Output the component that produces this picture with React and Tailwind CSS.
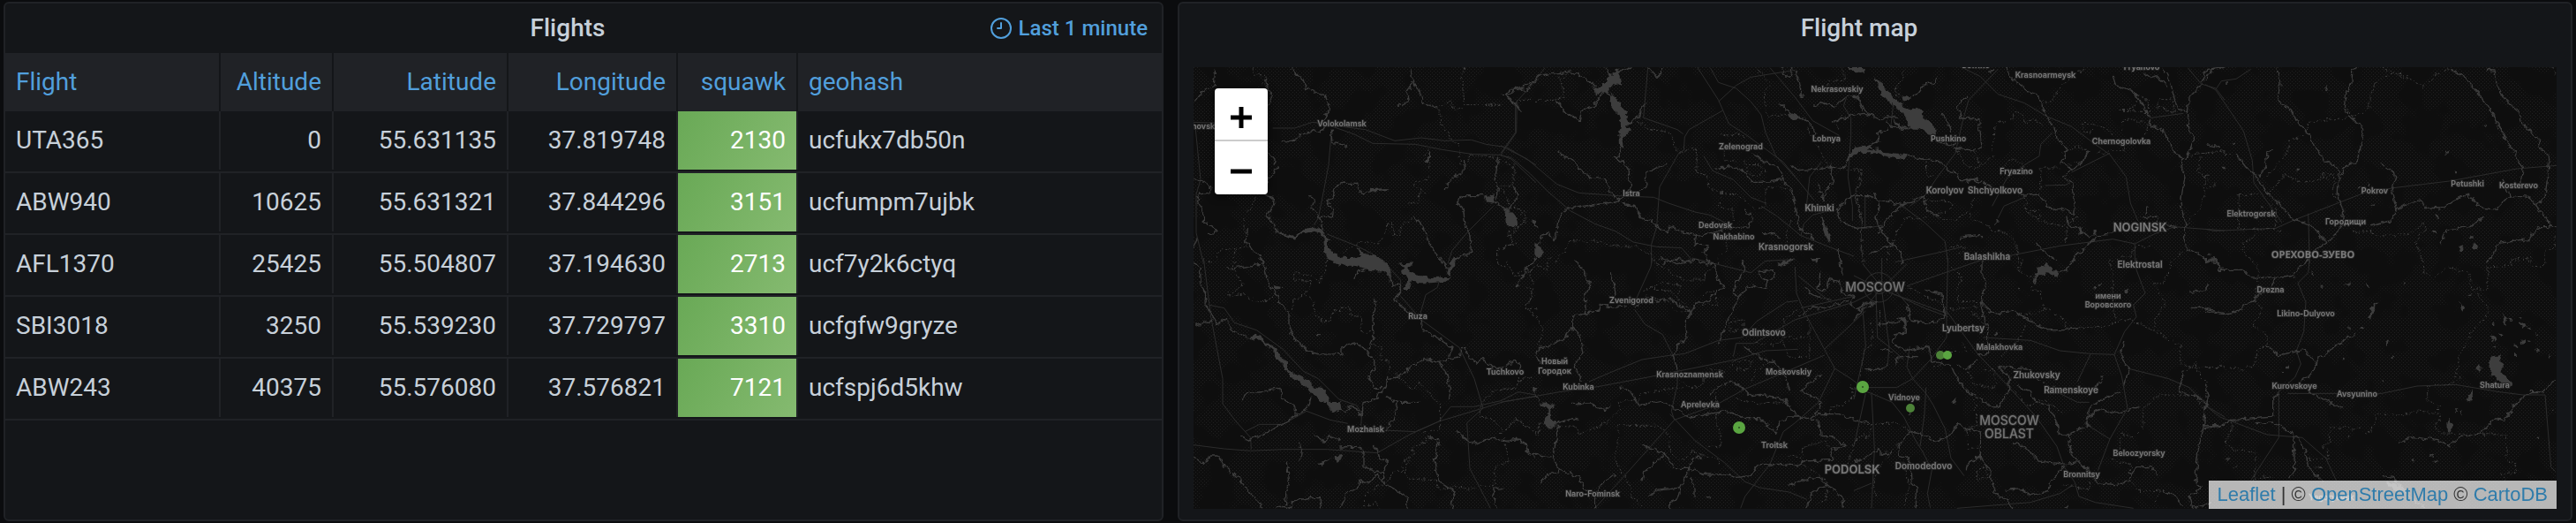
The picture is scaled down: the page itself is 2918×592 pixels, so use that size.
import React from "react";

const FLIGHTS = [
  ["UTA365", "0", "55.631135", "37.819748", "2130", "ucfukx7db50n"],
  ["ABW940", "10625", "55.631321", "37.844296", "3151", "ucfumpm7ujbk"],
  ["AFL1370", "25425", "55.504807", "37.194630", "2713", "ucf7y2k6ctyq"],
  ["SBI3018", "3250", "55.539230", "37.729797", "3310", "ucfgfw9gryze"],
  ["ABW243", "40375", "55.576080", "37.576821", "7121", "ucfspj6d5khw"],
];

const COLUMNS = [
  { name: "Flight", width: "w-[244px]" },
  { name: "Altitude", width: "w-[128px]", right: true },
  { name: "Latitude", width: "w-[198px]", right: true },
  { name: "Longitude", width: "w-[192px]", right: true },
  { name: "squawk", width: "w-[136px]", right: true, heat: true },
  { name: "geohash", width: "", last: true },
];

// Each tile holds its vector layers in tile units (a third of a map unit).
const TILES = [
  {
    x: 1320, y: 0,
    rivers: "M170 230L166 290 120 315 96 350M425 230L440 245 470 275 480 300 520 318 540 322 552 350 562 370 545 390 538 410M565 440L570 485 605 492 617 503M540 430L525 450 505 440 485 452 460 455 440 478 415 478 395 482M833 230L840 280 862 308 878 350 900 362 930 366M840 285L822 310 825 345 790 362M340 265L345 295 362 325 350 360M350 515L372 540 370 560M385 562L355 600 340 640 345 655M1260 275L1225 308 1190 292 1180 315 1157 325 1190 352 1210 380M1015 545L1018 575 985 600 958 625 955 645M96 608L130 615 160 640 150 655 115 660 110 690 130 720 130 755 165 772 175 782 165 792 145 793M96 845L110 805M340 665L365 670 372 685 345 735 372 765 375 790 410 795M490 667L508 675 498 705 525 740M545 685L570 670 575 640 600 622 650 622 670 660 700 645 755 642M545 685L570 705 565 735 525 740 535 790M845 735L880 775 885 805 905 835 940 895M1085 665L1010 665 992 690 1012 710 1020 760 1035 800 1040 860 1000 870 975 890M1110 680L1165 718 1200 665 1185 630M1130 530L1122 610 1132 645 1125 680M280 780L275 820 300 855 325 865 330 895",
    water: "M1158 718C1178 710 1202 745 1195 765C1180 780 1155 770 1155 735ZM1082 670L1118 656 1115 690 1090 685ZM885 548L900 512 900 535 888 556ZM695 642L755 640 755 645 697 650ZM395 785L440 805 475 776 520 772 540 790 555 815 555 845 585 865 620 880 660 872 650 840 680 862 720 870 745 895 745 902 600 902 555 885 540 850 538 800 510 785 470 792 440 812 405 800Z",
    roads: "M365 435L440 435 500 415 540 420 640 455 705 487 850 490 940 508 1040 523 1140 526 1175 540 1260 620M600 430L680 440 780 478 870 468 950 478 1040 475 1090 490 1160 500 1260 560M1195 340L1193 450 1140 526M96 415L180 418M565 440L555 560 540 640 520 740 505 765M103 440L120 610 105 660 105 790 130 895M550 795L650 835 700 860 745 895M960 895L975 850 1030 785 1080 735 1115 700",
    borders: "M297 230L300 255 335 258 338 275 315 298M1020 230L1005 255 1018 320 1012 356 1145 355M930 366L965 345 985 372 1010 368M930 370L940 420 960 450 975 485 1000 488 1005 560M895 505L878 540 900 560 898 600 850 620 845 632 890 655M865 640L860 690 825 692M845 735L800 770 798 800 780 800 770 758 752 760 750 790 720 830 680 820 640 828 600 865M310 670L290 705 262 735 270 780 275 840 180 850 175 890 135 890M240 848L225 895M1185 560L1185 625 1130 632 1160 665 1165 690 1220 720 1222 755 1165 790 1190 828 1130 848 1130 895M1025 555L1035 525 1120 535 1180 560",
  },
  {
    x: 1700, y: 0,
    rivers: "M0 325L15 325 48 292 60 305 110 278 130 255 180 250 235 243 280 262 320 290M15 325L40 345 70 378M350 310L325 345 315 360 280 368 270 410 245 395 215 380 200 350 180 340M385 265L415 235 445 228M500 228L530 262 548 250 548 228M495 347L475 370 470 395 435 415M408 490L402 532 385 530 410 548 435 575 440 635 405 680 370 650 355 605 310 605 265 575 250 545 215 530 195 515M568 555L520 575 492 590 495 635 470 650M405 680L360 690 270 702 218 712 195 745 185 820 160 790 140 795 135 820 118 850M415 690L455 700 475 740 510 748 535 775 565 788 575 768 600 780 640 795 665 800 720 790 790 775 845 770 853 745 832 710M665 800L660 830 705 830 690 855 710 895M720 572L750 565 800 568 830 585 850 620 910 618 960 610 985 640 1000 690 1010 740 1015 780 1050 800 1065 815M945 348L985 385 1040 410 1062 430 1070 470M1000 240L1015 275 1022 325M955 230L965 258 985 258 990 230M1065 358L1090 348 1135 362 1180 325 1215 330 1230 375M1125 418L1180 395 1230 385 1260 390M850 520L900 550 945 570 960 610M985 560L1010 578 1060 575 1130 565 1165 575 1180 545M1080 625L1095 680 1110 640 1130 620 1120 560M885 790L930 795 950 810M1200 665L1170 680 1140 715 1155 755 1210 775 1260 770M550 895L600 880 650 890M1150 840L1150 895",
    water: "M350 228L375 255 400 235 405 265 410 295 385 280 364 306 378 325 405 345 405 362 430 385 427 408 445 415 425 430 445 437 420 460 417 500 402 498 400 460 408 430 407 400 370 348 370 320 350 312 320 322 316 295 345 298 370 265ZM15 720C35 715 60 740 57 765C35 785 15 765 15 720ZM115 825L140 840 145 860 125 875 115 860ZM1178 228L1230 228 1240 250 1215 245ZM975 385L1010 395 1000 405 980 398ZM1170 545L1190 515 1230 492 1260 500 1240 515 1200 525 1180 550ZM1090 730L1110 780 1125 822 1110 815 1095 770ZM1018 318h10v12h-10ZM105 745L120 750 128 780 115 765Z",
    roads: "M668 228L740 340 775 420 830 455 960 550 1065 680M712 230L740 280 800 300 850 345 885 390 900 450 935 530 1000 600M740 345L800 290 850 262 1000 238M755 375L640 440 625 465 622 510 605 520 540 635 530 770 512 830 512 895M0 528L35 535 100 590 160 650 235 715 320 760 390 785 450 822 530 838 615 842 655 890M0 495L90 540 190 625 265 655 400 665 520 670 570 690 660 720 710 730 770 760M150 230L95 300 50 350 50 450 0 520M500 230L485 400 600 440 620 455M885 700L940 735 1020 800 1120 840 1200 870M1175 330L1165 360 1190 400 1190 460 1180 600 1195 700 1195 750M915 230L1000 330 1060 410 1150 460M1020 800L1030 760 1060 730 1100 720M690 530L720 580 790 610 850 670 900 690M1040 690L1050 600 1090 550",
    borders: "M200 260L215 330 180 340 60 340M235 245L200 275M465 415L500 435 580 452 590 490 605 520 668 500 665 585 700 595 710 640 750 655 740 700 790 715 790 750M870 230L885 250 920 285 895 310 895 350 910 395 960 390 1040 400M745 455L780 460 800 450 830 465M760 500L760 545 800 550M830 545L835 580 870 600 900 580 880 560 840 560M750 655L800 660 830 680 860 712 900 700 900 640 940 630 990 650M1045 410L1050 460 1090 520 1110 560M1160 230L1165 270 1120 275 1115 290M1175 580L1210 570 1225 600 1210 660 1225 750 1230 895M990 750L970 790 975 830M0 630L40 630 40 560M55 705L85 740 50 785 25 800 45 830 0 845M230 818L335 820 370 835 470 840 520 870 525 895M230 818L220 855 195 870 185 895M765 820L770 850 740 870 740 895M1160 390L1140 420 1150 440",
  },
  {
    x: 2100, y: 0,
    rivers: "M25 350L40 380 85 405 110 395 150 400M285 262L275 280 240 285 210 325 180 340M390 325L365 340 352 370 365 402 425 405 435 500 410 510 340 505M300 390L320 420 330 455 345 495 280 480M515 230L540 270 590 310 620 320 640 355 655 400 680 430 690 470 725 510 705 550 740 575 710 600 740 620 750 700 750 730 705 705 680 715 640 680 630 660 560 665M800 510L770 560 740 575M480 232L460 245M880 258L890 290 950 310 975 350 1000 390 1010 430 1040 435 1075 480 1080 510 1120 540 1115 570 1125 600 1110 690 1130 770 1120 800 1130 840 1185 870 1195 890 1230 880M985 245L1010 265 1035 260 1065 295M1050 230L1075 275 1085 320 1100 370 1135 378 1140 450 1155 465 1140 520 1115 545M1260 228L1200 235 1180 290 1140 330 1135 378M120 435L80 455 90 480 40 500M180 528L240 542 270 545 300 550 320 580 350 585 355 610 400 612 440 620 470 640M0 665L50 665 90 680 165 695 200 680 240 665M70 650L85 700 75 740 90 780 130 830 160 860 165 895M165 695L110 745 85 790M130 830L60 860 50 865M725 735L730 765 775 785 800 805 820 785 830 800 880 795 890 765M440 800L420 800 360 808M980 740L1030 735 1035 760 1100 770M1000 700L990 730M735 890L780 845 830 800M620 825L650 860 690 885M240 665L245 710 290 735M190 442L130 432 110 410M90 470L60 490",
    water: "M70 265L90 275 110 310 150 345 195 375 215 362 240 380 235 395 275 430 280 458 255 450 230 440 190 440 180 400 130 355 95 320ZM0 232L35 235 25 250 0 245ZM0 500L40 492 45 510 85 505 100 515 180 525 170 540 125 535 80 520 0 520ZM130 400L160 425 190 440 150 432ZM765 768L782 790 770 798ZM160 325L192 335 170 347ZM482 745l10 0 -2 16 -8 0ZM375 612L420 602 425 608 385 618Z",
    roads: "M370 230L430 260 490 320 580 350 655 395 740 430 820 490 870 525 925 600 940 690 965 750M490 235L390 340 370 410 345 520 285 600 240 665 190 700M165 700L240 755 310 820 320 895M0 775L40 775 100 765M650 630L720 628 735 620M870 520L740 585M675 450L635 490 630 530 580 560 520 605 470 700M140 890L300 855 360 840M520 870L700 835 880 812 955 828 1020 795 1090 770 1150 775 1260 783M955 828L955 895M1135 230L1180 285 1230 300 1260 340M490 740L510 700 580 670M1010 400L1120 385M38 665L38 775M135 345L125 435",
    borders: "M170 230L165 270 145 290 150 330M780 235L740 260 710 290 670 345 635 345M480 420L500 415 540 405 545 375 570 385 580 415 610 405 640 425M480 430L475 460 470 530 440 560 400 530M900 375L950 370 970 325 1000 340 1000 380 900 375M1030 370L1035 335 1080 340 1090 385 1030 360M780 415L830 425 870 445 880 465M775 420L785 450 820 445M910 440L920 400 1000 420 990 460M830 520L920 510 915 480M705 520L760 500 795 510 780 550 720 560M635 570L700 570M635 575L635 640M500 570L540 540 575 560 580 590M245 540L250 590 280 610M240 680L250 715 300 745 350 745 400 710 410 670M245 680L300 680 335 690 320 720 270 725M395 720L400 745 455 760 460 780 520 790 555 830 560 895M580 670L585 720 640 755 715 768 760 735M725 770L720 830M600 715L635 715 630 740 605 740ZM0 580L25 575 20 620 5 660 20 730 30 840 35 895M1145 525L1260 512M1180 530L1170 580 1195 600 1190 670 1175 710 1140 750 1120 800M880 890L900 875 940 870 960 835 1010 840M325 840L360 830 380 845 350 865M250 740L180 740 150 780 120 850 110 895M1080 890L1120 850M350 510L370 550 400 570M410 515L430 560 405 580",
  },
  {
    x: 2498, y: 0,
    rivers: "M0 275L25 235 65 230M243 230L255 280 245 340 285 370 310 410 345 450 375 500 400 540 455 575 450 670 470 715 465 765 440 800 410 825 370 850 340 890M520 230L500 240 498 280 480 310 472 365 485 395 530 425 540 460 528 500 520 550 480 560 460 595M597 555L640 585 645 610 635 650 650 715 630 750 560 765M650 715L690 690 735 680 750 705 800 708 840 685 890 660 940 705 990 712 1035 665 1100 670 1115 690 1180 768M1035 665L1025 630 1010 605M835 235L885 265 925 315 960 360 1000 430 1030 490 1060 530 1080 580 1070 620M955 238L985 240 990 290 1030 350 1065 380 1070 410 1130 470 1135 500 1170 530 1165 580 1155 670 1120 695M1190 770L1130 770 1100 815 1000 825 980 860 955 895M945 740L900 770 820 780 797 832M105 525L140 570 180 605 210 655 260 700 300 748 350 760 380 785 410 820M230 510L210 520 205 560 185 600M0 885L30 875 45 895M0 490L45 500",
    water: "M862 840l8-8 8 4-2 14-10 2ZM908 832l8-6 12 10 -4 10 -14 4ZM774 780h9v9h-9ZM900 802h8v8h-8ZM940 422l16 8 2 5-8-3ZM408 294l10 10-3 5-6-8ZM816 518l14-7-4 8-8 3ZM846 581h6v8h-6ZM562 700l16-5-4 5-8 6ZM311 572h7v8h-7ZM57 566h7v8h-7ZM66 280h9v4h-9ZM98 485h4v10h-4ZM550 620h5v10h-5ZM516 630h8v10h-8ZM782 730l14 6-2 5-10-4ZM0 590h8v6h-8ZM190 700h4v6h-4ZM248 782h4v6h-4ZM10 860h6v6h-6Z",
    roads: "M0 287L35 305 80 370 130 445 160 545 165 620 260 755M155 235L105 268 55 275 35 305M0 778L30 784 240 775 300 748 450 690 540 655 640 638 830 615 1060 573 1194 562M350 725L355 895",
    borders: "M0 522L50 512 95 530M200 610L245 560 240 550M215 655L270 595 330 620 400 605 440 590M345 450L285 480 280 520 250 550M345 450L355 415 475 400 520 390 560 365 562 320 590 265 640 250 700 270 740 297 780 260 830 235M400 600L440 620 430 650 445 680M115 662L180 660M115 662L112 778M105 780L240 775 245 720 220 680M165 785L165 810 130 825 130 855 165 895M498 788L555 785 580 798 690 797 745 755 745 780 715 820 740 895M1190 790L1185 840 1155 860 1155 895M1040 895L1045 880 1105 875 1110 895M0 600L35 630 0 640M1185 230L1190 262M480 370L500 395M600 235L660 250 690 260M390 600L420 585 445 610",
  },
  {
    x: 1320, y: 292,
    rivers: "M96 12L118 35 122 100 140 120 138 160 165 205 140 218 100 230M165 205L180 225 205 205 225 245 280 270M205 30L235 35 335 20 345 50 350 90 385 125 385 150 420 185 420 230 440 275 485 318 530 328 600 325 600 300 650 290 680 310 710 350 710 380 690 405 710 440 750 440 755 410 785 405 840 365 885 340 930 352 1000 335 1005 305 1020 305 1030 335 1060 355 1080 340 1110 375 1165 365 1190 348 1205 365 1200 385M320 0L335 20M690 310L708 260 705 200 718 160 706 138M930 352L960 400 968 440 962 480M750 440L725 460 720 480 672 492 670 530 660 535 655 515 630 505 610 520 590 510M765 65L768 100 795 85 800 115 780 135 800 165 820 180 870 210 875 245 900 255 975 305 965 335M935 0L960 35M640 70L655 45 680 40M1260 0L1225 40 1200 90M262 480L275 462 340 452 390 442 395 475 440 505 445 535 400 560 350 590 280 620 255 605M445 535L490 500 495 470M505 600L540 625 555 605 590 618M752 470L790 490 865 490M790 490L775 550 750 585M452 632L465 650 455 690M592 642L650 640 675 660 675 710 740 730 755 690 730 685 720 650 705 640M96 678L130 700 150 672 180 672 200 705 255 750 290 800 325 832 328 850M415 692L422 760 410 800 410 840M375 850L390 840 425 850 430 825 485 815 525 815 530 850M590 850L610 820 610 800 655 780 660 755 690 765 720 735 750 770 790 790 820 810 822 850M890 605L930 615 915 690 930 760 985 795 970 830 975 850M990 588L1030 620 1060 632 1110 608 1150 620 1200 612 1225 640 1235 670 1260 675M1150 782L1120 785 1110 810 1130 848M740 730L740 760",
    water: "M560 0L735 0 765 40 768 68 740 44 700 42 660 30 620 18ZM790 20L845 16 822 40 850 58 900 65 968 66 955 80 900 85 860 85 838 75 825 105 812 105 830 70 800 45 815 30ZM955 45L980 0 992 0 965 60ZM278 270L320 262 350 290 380 310 390 340 420 355 420 380 450 398 490 415 495 435 540 442 555 470 552 488 595 490 598 515 570 525 545 495 500 465 470 430 430 405 405 380 400 360 375 340 370 318 330 285ZM365 92L398 100 380 110ZM510 258h16l-5 7h-8ZM515 700L565 682 530 704ZM575 675L597 668 600 685 580 692ZM1190 86h12v12h-12Z",
    roads: "M96 635L200 648 290 655 400 650 550 650 720 662 830 600 930 555 1080 510 1150 488 1260 470M130 0L155 200 195 410 195 495 240 555 290 610 292 650M150 160L200 170 235 220 310 245 400 310 470 385 520 410 590 480 650 500 668 530 665 570M270 590L320 565 400 565 480 520 560 550 620 562M745 585L850 590 930 555 970 505 1050 505 1140 485 1200 455 1260 465M1000 305L1050 410 1080 510 1025 560 1035 715 1105 850M870 210L1000 305M800 130L870 210M935 60L925 100 885 125 868 185 870 210M730 0L800 75 800 110",
    borders: "M235 10L230 40 265 90 210 130 265 120 300 145 350 145 370 120M550 0L545 40 525 80 495 60 440 50 440 75 500 80 475 125 435 145 430 180M475 125L505 150 505 185 540 215 560 215 570 180 625 165 630 190 665 205 668 255 705 250M700 295L735 300 735 345 760 350 760 400M785 395L840 450 860 420 935 500 935 580 880 595 885 620 845 640 840 670 805 690 810 725 770 725 765 750 680 800 680 850M825 685L815 730 830 750 915 755 930 785 1010 775 1020 790 1060 775 1120 775 1120 710 1170 690 1150 610M1205 400L1190 445 1115 450 1075 490 1070 540 1110 545 1150 590 1195 545 1250 590M1260 170L1225 175 1250 100 1240 40 1190 50 1130 20 1130 0M690 840L715 830 725 850",
  },
  {
    x: 1700, y: 292,
    rivers: "M250 5L280 40 305 95 285 125 290 190 335 180 340 155 385 170 425 160M290 190L245 195 245 240 265 255 280 330 250 360 275 420M245 240L220 270 160 300 130 305 120 330 135 360M375 48L385 90 390 125M455 165L490 150 550 145 575 135 610 165 650 185 625 210 630 270 600 300 585 330 600 380M650 185L665 150 700 150 740 110 760 95 735 70 730 25 650 5 600 20 540 0M820 10L830 40 800 80 790 120 810 130 765 225 735 295M810 130L850 95 905 108 905 75 885 70 880 45 920 40 930 60 905 78M110 445L130 490M200 570L175 680 205 720 270 745 285 785 320 800 320 850M240 493L300 495 350 517 370 500M0 620L30 625 60 615 85 635 100 665 170 675M185 565L240 545 265 550M135 762L160 735 205 722M320 800L345 765 390 735M410 435L440 450 470 500 540 485 590 510 640 540 770 520 830 545 880 545 935 592 950 560 975 540 1020 540 1050 545 1080 520 1090 490 1070 475 1025 455 1040 430 1095 395M710 470L720 445 780 420 820 440 850 470 900 465 970 485 990 520 1020 545M825 298L880 340 930 355 965 400 980 450M480 632L520 650 560 665 590 715 640 715 700 735 760 735 800 745 850 740 870 705 940 700 1010 705 1030 690 1130 685 1120 650 1170 640 1130 605 1090 605 1080 550 1050 550M560 665L530 690 485 725 480 760M640 720L610 780 530 790 500 805M610 780L600 820 575 830 575 850M640 745L660 775 660 815M640 715L655 680 680 675M1085 50L1080 110 1110 110 1115 70 1150 80 1160 120 1200 130 1190 160 1215 175 1240 150 1260 155M1180 145L1140 155 1100 170 1060 165 1015 200M1030 105L1060 125 1120 145M980 775L1040 750 1080 745 1110 770 1060 795 1040 850M1110 770L1160 810 1165 850M1080 530L1150 530 1200 550 1260 560M1150 0L1165 60",
    water: "M135 490L188 495 168 515 172 545 188 560 165 578 148 562 150 545 162 520ZM109 441h12v12h-12ZM50 87h14v13h-14ZM1052 0h32l-10 20ZM940 20L1000 0 980 18 950 30ZM700 810l12 0 2 8 -10 -2Z",
    roads: "M0 490L200 455 330 437 500 405 650 375 800 345 900 315 1010 310M320 850L420 740 590 550 730 500 830 445 960 390 1100 330M590 550L580 520 600 430 600 390M575 530L660 620 760 695 830 760 880 780 980 795 1040 820M455 175L490 225 550 260 585 330 625 325 740 280 820 270 870 215 970 150 1010 145M300 420L370 390 480 345 580 330M1000 30L1005 120 1030 180 1100 310 1135 375 1190 410 1230 440M1100 310L1240 180M1135 375L1080 490 1000 560 960 590 915 700 830 810 815 850M460 140L510 30 515 0M650 0L850 50 900 10 1000 5M1020 170L1200 130M1010 60L1120 150M790 335L800 290 860 290 1000 210 1200 150",
    borders: "M165 0L155 40 130 25 70 60 50 60 20 10M85 90L105 120 85 175 120 200 145 240 125 300M515 10L620 75 700 75 690 50 730 30M485 110L550 85 610 90 600 130 650 180 600 185 570 150 500 130ZM520 100L590 120 620 170M680 160L740 160 720 110 690 125M780 250L780 215 825 210 825 240 790 250M960 250L960 215 1010 175 1050 220 1050 340 980 335 960 300ZM870 290L940 295 960 270 1050 270M0 450L50 440 60 415 110 405M0 600L50 545 130 600 130 560 190 570 260 575 265 600 360 560 400 520 400 490 470 480 475 460 620 440M400 568L395 650 385 680 440 780 445 810 480 850M400 568L530 568 570 595 575 660 610 690 650 655 750 690 740 700M730 460L735 560 750 610 745 640 695 640M700 375L760 385 800 350 860 350 830 380 800 375M620 420L640 440 690 435 690 410M855 415L870 380 920 350M790 475L880 495 970 490 980 510M1190 430L1200 470 1150 505 1120 510 1115 530M980 670L1020 680 1030 640 1110 620 1120 650M1020 700L1070 730 1110 760 1105 820 1070 840M1180 700L1200 630 1230 600",
  },
  {
    x: 2100, y: 292,
    rivers: "M435 0L435 60 450 90 430 150 475 190 540 180 600 215 660 245 710 245 770 235M750 5L720 45 700 45M180 155L195 210 240 220 290 215 310 190 300 120 245 110M85 180L90 225 150 220 175 200 175 255 140 260 130 290 170 315 255 300 265 350 330 365 350 410 380 450 430 480 480 510 525 460 530 405 490 370M88 312L130 315M140 365L150 335 215 335M0 215L30 170 80 150M430 150L440 200 455 240 455 325 420 330M380 378L420 345M490 370L560 375 600 380M555 435L600 450 620 490 660 500 690 560 700 600 730 600 735 660 790 720 830 765 890 770 935 760 940 740M730 600L790 570 800 510 850 475 910 455M790 545L830 515 890 525 970 505M840 400L845 420 810 445M918 280L905 330 935 380 920 430M1185 5L1240 15 1240 40 1260 40M1140 115L1190 110 1205 90M1145 170L1180 168 1260 185M1120 390L1105 455 1170 470 1195 500 1190 570 1170 650 1160 750 1180 780 1140 810 1150 850 1215 830M1190 570L1260 568M150 640L190 590 235 600 280 625 330 600 355 560 370 580 430 590 430 680 460 720 480 800 530 830 540 850M150 640L155 670 190 680 195 760 215 780 210 850M0 690L40 680 90 645 90 670 120 660M430 670L385 700 382 715M540 630L580 640 630 690 720 700 765 695 800 720M515 790L570 785 600 805 660 790 680 740 720 705M940 740L960 710 1010 710 1035 745M1050 790L1090 810 1115 840M40 380L95 378 115 362M720 850L730 840",
    water: "M610 85L622 40 655 18 675 42 698 45 692 65 660 52 630 58 615 85ZM140 205L178 198 180 250 168 215ZM920 106h11v11h-11ZM788 562h12v10h-12ZM812 98l10-3 0 7-10 2ZM826 88l14-3-2 7-10 0ZM330 490l22-10-8 10-12 4ZM184 534l10-8 0 8-8 4ZM474 258l10-8 2 10-10 5ZM558 104h6v8h-6Z",
    roads: "M95 100L0 215M95 100L30 20M95 100L95 0M100 100L180 20M100 110L320 190M180 95L440 5 500 0M95 110L120 300 115 360M75 120L80 270 130 310 170 345M35 100a50 50 0 1 0 100 0a50 50 0 1 0 -100 0M65 100a22 22 0 1 0 44 0a22 22 0 1 0 -44 0M0 150L60 120M0 60L60 90M140 110L180 155M320 0L315 180 315 270 265 340 200 410 145 440 40 440M315 180L420 325 510 420 620 540 690 640 715 710 750 760 765 810 820 830 950 850M0 440L60 460 130 490 170 540 210 620 235 660 265 720 250 800 260 850M40 460L0 640M60 460L70 650 60 850M200 410L245 460 270 500 310 580 330 680 375 740M190 300L180 370 200 410M130 120L240 170 320 200M245 440L240 530 225 640M440 270L600 280 700 315 800 325 885 328 920 250 960 200 950 160 990 120 960 40 960 0M885 328L910 400 930 510 870 615 830 720M790 565L870 615M805 325L760 420M930 375L1070 410 1140 440 1210 510 1260 540M350 850L600 830 700 800 745 770M690 455L760 490 800 490M0 480L40 300 30 170M0 790L60 765",
    borders: "M60 225L65 260 60 300 30 310 25 400M185 100L330 175 420 165M330 30L370 70 345 110 355 150 430 145M570 5L560 45 620 70 600 110 640 110 635 140 650 170 620 190 560 190M650 170L715 210 720 240 800 235 840 240 930 205 1020 245 1060 270 1110 300 1110 360 1150 370 1260 370M870 5L880 60 880 130 890 220M1080 10L1060 80 1020 90 1060 150 1020 215 1020 245M580 230L560 280 520 310 500 340M350 360L385 380 410 430 480 440 475 380 440 380M410 480L420 570 385 580 385 650 430 640M545 450L590 500 640 480 700 520 700 530M600 400L680 440M0 550L60 570 50 610 30 600M60 565L150 560 190 590M905 650L905 600 950 610 980 580 985 510 1035 465 1165 465 1190 520M1120 390L1160 355 1170 390 1200 420 1200 500M875 685L940 700 940 750 965 790 1040 790 1020 830M130 655L80 720 65 780 75 810M415 720L450 710 455 745 420 755ZM710 770L800 785 800 760M175 840L190 770 165 690M330 320L370 318M270 365L295 368 300 350M370 290L385 320M400 180L450 230",
  },
  {
    x: 2498, y: 292,
    rivers: "M0 5L40 5 45 40 130 40 150 65 240 70 300 60 320 30 355 5M240 70L225 95 150 150 105 185 70 192 0 178M207 298L250 330 335 312 360 335 378 365 350 405 325 418M378 365L385 335 410 330 420 310 450 300 470 280 507 262M0 430L10 470 0 520M250 455L230 475 230 540 170 545 90 550 50 570 0 578M230 555L300 600 305 720 285 750M305 600L340 650 350 710 400 760M350 455L400 480 465 510M170 560L230 555M660 628L710 608 790 620 830 640 870 605 930 595 990 545 1015 552 1060 490 1105 455 1145 455 1190 415M960 15L970 0M600 740L640 745 700 820 740 845",
    water: "M975 335L1000 330 1010 360 1010 390 1020 402 1042 425 1035 440 1010 432 985 400 968 400 972 375 963 355ZM565 165L590 147 570 185 560 212 552 205ZM895 465L910 450 915 465 900 490 890 488ZM820 560L830 545 834 562 846 568 838 585 832 595 822 590ZM868 150L882 165 878 182 868 170ZM1012 190L1022 200 1022 235 1015 225ZM1025 203l20 2-8 8ZM612 278h12l-8 24ZM918 375l12-8 12 8-12 8ZM628 338l14-10 0 6-12 10ZM526 234h10v9h-10ZM476 88l18-6-8 10ZM546 84l14 12-8 0ZM975 220h10v14h-10ZM966 258l14 0 8 22-6 6ZM998 255l12 8-4 8ZM972 298l18 2 0 8ZM1062 202l10 0 0 6ZM1072 222l14-2 6 14-14 2ZM1088 240l20 0-4 6ZM1045 295l20 2-16 6ZM1072 278l14-4 0 14-12 2ZM1092 280l16 2-8 4ZM1120 255l12 6-2 3ZM1122 306l10 14-6 0ZM1164 330l8 6-4 6ZM1050 325h12v5h-12ZM1180 516h6v9h-6ZM1130 608h7v7h-7ZM848 514l8 0-2 10ZM866 520l6-5-4 15ZM892 130l14-4-4 8ZM764 672l18-6-6 12ZM700 688l12-4-4 14ZM770 690l20-2-8 8ZM276 368h9v8h-9ZM246 390h16v3h-16ZM90 710l22-4 0 4ZM68 680l14-2-6 6ZM374 706l24 10-12 2ZM480 610l12-10-4 10ZM598 418l10-4-4 8ZM482 238l10-3 0 5ZM468 338h5v8h-5ZM674 86h7v7h-7ZM392 92h8v6h-8ZM362 46h4v10h-4ZM620 760L645 762 680 790 650 790 620 775Z",
    roads: "M355 0L350 50 315 85 342 150 335 250 310 315 325 360 305 405 250 455 250 610 155 755M280 460L440 460 600 460 720 435 850 430 1000 455 1080 465 1155 465 1175 710 1190 725M0 500L50 540 130 570 210 600 330 610 410 680 445 755",
    borders: "M150 0L180 20 180 80 165 150 195 165 160 230 210 260 210 300 180 310 165 365 130 378 0 370M740 0L745 50 780 62 825 30 900 55 905 105 960 105 960 30 1040 25 1045 0M1090 0L1110 30 1155 25 1155 0M915 110L960 170 955 200 915 240 860 340 850 400 870 405 835 430 755 435 755 485 800 503 770 530 800 540 780 570 800 597 1025 600 1022 690 1055 695 1055 730 1005 735 1020 755M805 530L720 522 660 535 578 530 575 570 550 600 530 580 425 575 420 630 395 640 415 650 415 682 350 682M95 560L70 630 105 655 155 655 170 670 170 750M160 755L200 740 230 750",
  },
];

// [name, x, y]
const TOWNS = [
  ["Shakhovskaya", 1360, 146], ["Volokolamsk", 1520, 143], ["Nekrasovskiy", 2081, 104],
  ["Zelenograd", 1972, 169], ["Lobnya", 2069, 160], ["Istra", 1848, 222],
  ["Dedovsk", 1943, 258], ["Nakhabino", 1964, 271], ["Krasnoarmeysk", 2317, 88],
  ["Sofrino", 2238, 77], ["Fryanovo", 2426, 79], ["Pushkino", 2207, 160],
  ["Chernogolovka", 2403, 163], ["Fryazino", 2284, 197], ["Elektrogorsk", 2550, 245],
  ["Городищи", 2657, 254], ["Pokrov", 2690, 219], ["Petushki", 2795, 211],
  ["Kosterevo", 2853, 213], ["Ruza", 1606, 361], ["Tuchkovo", 1705, 424],
  ["Mozhaisk", 1547, 489], ["Zvenigorod", 1848, 343], ["Новый", 1761, 412],
  ["Городок", 1761, 423], ["Krasnoznamensk", 1914, 427], ["Moskovskiy", 2026, 424],
  ["Kubinka", 1788, 441], ["Aprelevka", 1926, 461], ["Troitsk", 2010, 507],
  ["Naro-Fominsk", 1804, 562], ["Malakhovka", 2265, 396], ["Vidnoye", 2157, 453],
  ["Bronnitsy", 2358, 540], ["Beloozyorsky", 2423, 516], ["имени", 2388, 338],
  ["Воровского", 2388, 348], ["Drezna", 2572, 331], ["Likino-Dulyovo", 2612, 358],
  ["Kurovskoye", 2599, 440], ["Avsyunino", 2670, 449], ["Shatura", 2826, 439],
  ["Yegoryevsk", 2641, 566],
];

const LARGE_TOWNS = [
  ["Khimki", 2061, 239], ["Krasnogorsk", 2023, 283], ["Korolyov", 2203, 219],
  ["Shchyolkovo", 2260, 219], ["Balashikha", 2251, 294], ["Elektrostal", 2424, 303],
  ["Odintsovo", 1998, 380], ["Lyubertsy", 2224, 375], ["Zhukovsky", 2307, 428],
  ["Ramenskoye", 2346, 445], ["Domodedovo", 2179, 531],
];

const CITIES = [
  ["NOGINSK", 2424, 262], ["PODOLSK", 2098, 536],
];

const CYRILLIC_CITIES = [
  ["ОРЕХОВО-ЗУЕВО", 2620, 292],
];

const REGIONS = [
  ["MOSCOW", 2124, 330], ["MOSCOW", 2276, 481], ["OBLAST", 2276, 496],
];

const MARKERS = [
  { x: 1970, y: 484, r: 7, fill: "#5aa541", core: true },
  { x: 2110, y: 438, r: 7, fill: "#5aa541", core: true },
  { x: 2164, y: 462, r: 5, fill: "#4c8238" },
  { x: 2198, y: 402, r: 5, fill: "#4c8238" },
  { x: 2206, y: 402, r: 5, fill: "#5aa541" },
];

function Labels({ items, className }) {
  return (
    <g className={className} textAnchor="middle" stroke="#262626" strokeWidth="2" strokeLinejoin="round" paintOrder="stroke">
      {items.map(([name, x, y]) => (
        <text key={name + x} x={x} y={y}>{name}</text>
      ))}
    </g>
  );
}

function MapDrawing() {
  return (
    <svg
      className="absolute inset-0 h-full w-full"
      viewBox="1352 76 1544 500"
      preserveAspectRatio="xMidYMid slice"
      role="img"
      aria-label="Flight positions around Moscow"
    >
      <defs>
        <pattern id="forest" width="4" height="4" patternUnits="userSpaceOnUse">
          <rect width="1" height="1" fill="#202020" />
          <rect x="2" y="2" width="1" height="1" fill="#202020" />
        </pattern>
        <filter id="patches" x="0" y="0" width="100%" height="100%">
          <feTurbulence type="fractalNoise" baseFrequency="0.025" numOctaves="3" seed="7" />
          <feColorMatrix values="0 0 0 0 1  0 0 0 0 1  0 0 0 0 1  14 0 0 0 -6" />
        </filter>
        <filter id="rough" filterUnits="userSpaceOnUse" x="1352" y="76" width="1544" height="500">
          <feTurbulence type="fractalNoise" baseFrequency="0.16" numOctaves="2" seed="3" />
          <feDisplacementMap in="SourceGraphic" scale="7" xChannelSelector="R" yChannelSelector="G" />
        </filter>
        <mask id="forestMask">
          <rect x="1352" y="76" width="1544" height="500" filter="url(#patches)" />
        </mask>
      </defs>
      <rect x="1352" y="76" width="1544" height="500" fill="#0e0e0e" />
      <rect x="1352" y="76" width="1544" height="500" fill="url(#forest)" mask="url(#forestMask)" />
      <g fill="none" stroke="#2c2c2c" strokeWidth="3" strokeLinejoin="round">
        {TILES.map((t) => (
          <path key={`${t.x}-${t.y}`} transform={`translate(${t.x} ${t.y}) scale(0.33333)`} d={t.roads} />
        ))}
      </g>
      <g filter="url(#rough)">
        {TILES.map((t) => (
          <g key={`${t.x}-${t.y}`} transform={`translate(${t.x} ${t.y}) scale(0.33333)`} strokeLinejoin="round">
            <path d={t.borders} fill="none" stroke="#404040" strokeWidth="3" strokeDasharray="6 6" />
            <path d={t.rivers} fill="none" stroke="#3e3e3e" strokeWidth="4" />
            <path d={t.water} fill="#3e3e3e" />
          </g>
        ))}
      </g>
      <Labels items={TOWNS} className="fill-[#7a7a7a] font-['Inter','Noto_Sans',sans-serif] text-[9px] font-semibold" />
      <Labels items={LARGE_TOWNS} className="fill-[#7a7a7a] font-['Inter','Noto_Sans',sans-serif] text-[10px] font-semibold" />
      <Labels items={CITIES} className="fill-[#7a7a7a] font-['Inter','Noto_Sans',sans-serif] text-[13px] font-semibold" />
      <Labels items={CYRILLIC_CITIES} className="fill-[#7a7a7a] font-['Open_Sans','Noto_Sans',sans-serif] text-[11px] font-bold" />
      <Labels items={REGIONS} className="fill-[#757575] font-['Inter','Noto_Sans',sans-serif] text-[14px] font-medium" />
      {MARKERS.map((m) => (
        <g key={`${m.x}-${m.y}`}>
          <circle cx={m.x} cy={m.y} r={m.r} fill={m.fill} />
          {m.core && <rect x={m.x - 1} y={m.y - 1} width="2" height="2" fill="#356327" />}
        </g>
      ))}
    </svg>
  );
}

function Panel({ title, extra, children }) {
  return (
    <section className="flex min-w-0 flex-col overflow-hidden rounded-md border-2 border-[#202226] bg-[#141619]">
      <header className="relative flex h-14 shrink-0 items-center justify-center pr-9">
        <h2 className="text-[28px] leading-8 font-medium text-[#c7d0d9]">{title}</h2>
        {extra}
      </header>
      {children}
    </section>
  );
}

function TimeRange() {
  return (
    <div className="absolute inset-y-0 right-4 flex items-center gap-2 text-2xl font-medium text-[#519fdc]">
      <svg className="size-6" viewBox="0 0 24 24" fill="none" stroke="currentColor" strokeWidth="2" strokeLinecap="round" strokeLinejoin="round" aria-hidden="true">
        <circle cx="12" cy="12" r="11" />
        <path d="M12 6v6H8" />
      </svg>
      Last 1 minute
    </div>
  );
}

function FlightTable() {
  return (
    <table className="w-full table-fixed border-separate border-spacing-0 text-[28px] leading-8 text-[#c7d0d9]">
      <thead>
        <tr>
          {COLUMNS.map((c) => (
            <th key={c.name} scope="col" className={`bg-[#202226] p-0 font-normal text-[#519fdc] ${c.width}`}>
              <div className={`flex h-[66px] items-center px-3 ${c.right ? "justify-end" : ""} ${c.last ? "" : "border-r-2 border-[#141619]"}`}>
                {c.name}
              </div>
            </th>
          ))}
        </tr>
      </thead>
      <tbody>
        {FLIGHTS.map((row) => (
          <tr key={row[0]}>
            {row.map((value, i) => {
              const c = COLUMNS[i];
              return (
                <td key={c.name} className="border-b-2 border-[#202226] p-0 pb-[2px]">
                  <div className={`h-[66px] ${c.last ? "" : "border-r-2 border-[#202226]"}`}>
                    <div className={`flex h-full items-center px-3 ${c.right ? "justify-end" : ""} ${c.heat ? "bg-[linear-gradient(120deg,#69a956,#85ba70)] text-white" : ""}`}>
                      {value}
                    </div>
                  </div>
                </td>
              );
            })}
          </tr>
        ))}
      </tbody>
    </table>
  );
}

function FlightMap() {
  const zoom = "flex h-[60px] w-[60px] items-center justify-center bg-white pt-2 text-black";
  return (
    <div className="relative mx-4 mt-4 mb-3 flex-1 overflow-hidden bg-[#0e0e0e]">
      <MapDrawing />
      <div className="absolute top-6 left-6 overflow-hidden rounded shadow-[0_2px_10px_rgba(0,0,0,0.65)]">
        <button type="button" aria-label="Zoom in" className={`${zoom} border-b-2 border-[#cccccc]`}>
          <svg className="size-[26px]" viewBox="0 0 26 26" stroke="currentColor" strokeWidth="5" aria-hidden="true">
            <path d="M1 13h24M13 1v24" />
          </svg>
        </button>
        <button type="button" aria-label="Zoom out" className={zoom}>
          <svg className="size-[26px]" viewBox="0 0 26 26" stroke="currentColor" strokeWidth="5" aria-hidden="true">
            <path d="M1 13h24" />
          </svg>
        </button>
      </div>
      <div className="absolute right-0 bottom-0 bg-white/70 px-[10px] font-['Liberation_Sans',Arial,sans-serif] text-[22px] leading-8 whitespace-nowrap text-[#333333]">
        <a href="#leaflet" className="text-[#2f7cab]">Leaflet</a> | ©{" "}
        <a href="#openstreetmap" className="text-[#2f7cab]">OpenStreetMap</a> ©{" "}
        <a href="#cartodb" className="text-[#2f7cab]">CartoDB</a>
      </div>
    </div>
  );
}

export default function App() {
  return (
    <main className="grid min-h-screen grid-cols-[1314fr_1580fr] gap-4 bg-[#0b0c0e] px-1 py-[2px] font-['Roboto',sans-serif]">
      <Panel title="Flights" extra={<TimeRange />}>
        <FlightTable />
      </Panel>
      <Panel title="Flight map">
        <FlightMap />
      </Panel>
    </main>
  );
}
